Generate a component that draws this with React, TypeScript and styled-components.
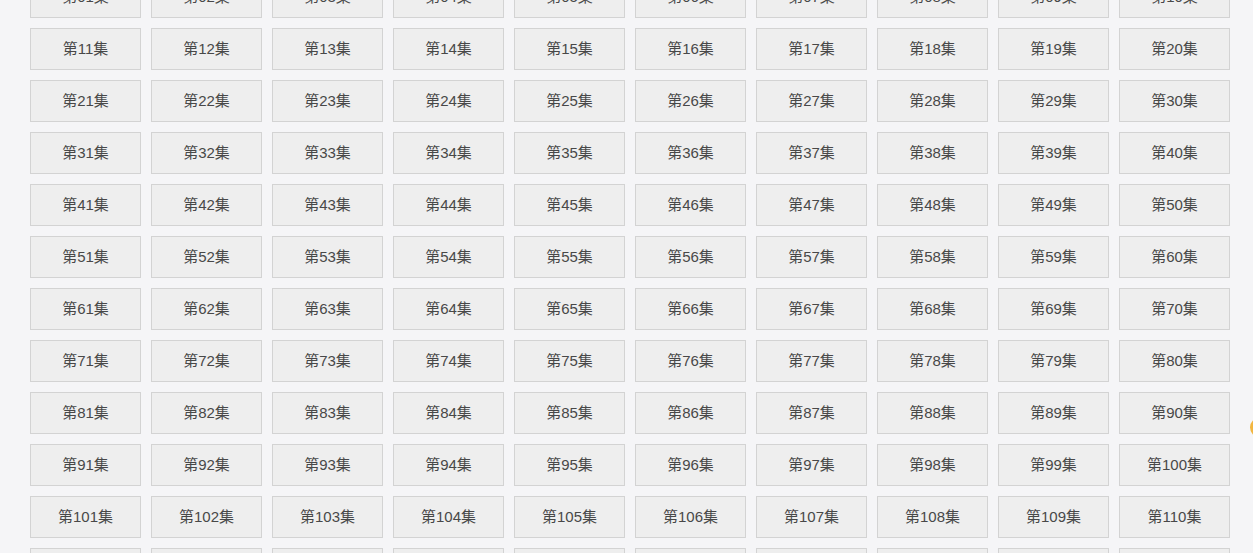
import React, { FC } from 'react';
import styled, { createGlobalStyle } from 'styled-components';

const GlobalStyle = createGlobalStyle`
  html, body {
    margin: 0;
    padding: 0;
    background: #f5f5f7;
    overflow: hidden;
  }
  body {
    font-family: 'Liberation Sans', 'Noto Sans CJK SC', sans-serif;
  }
`;

const Page = styled.div`
  width: 1253px;
  height: 553px;
  overflow: hidden;
  position: relative;
`;

const EpisodeGrid = styled.div`
  display: grid;
  grid-template-columns: repeat(10, 111px);
  grid-auto-rows: 42px;
  column-gap: 10px;
  row-gap: 10px;
  padding-left: 30px;
  margin-top: -24px;
`;

const EpisodeButton = styled.a`
  display: flex;
  align-items: center;
  justify-content: center;
  box-sizing: border-box;
  background: #eeeeee;
  border: 1px solid #d3d3d3;
  color: #484848;
  font-size: 15px;
  line-height: 20px;
  text-decoration: none;
  cursor: pointer;
`;

const FloatDot = styled.div`
  position: absolute;
  right: -18px;
  top: 417px;
  width: 21px;
  height: 21px;
  border-radius: 50%;
  background: #f2b640;
`;

const episodes = Array.from({ length: 120 }, (_, i) => String(i + 1).padStart(2, '0'));

const App: FC = () => (
  <Page>
    <GlobalStyle />
    <EpisodeGrid>
      {episodes.map((n) => (
        <EpisodeButton key={n}>第{n}集</EpisodeButton>
      ))}
    </EpisodeGrid>
    <FloatDot />
  </Page>
);

export default App;
